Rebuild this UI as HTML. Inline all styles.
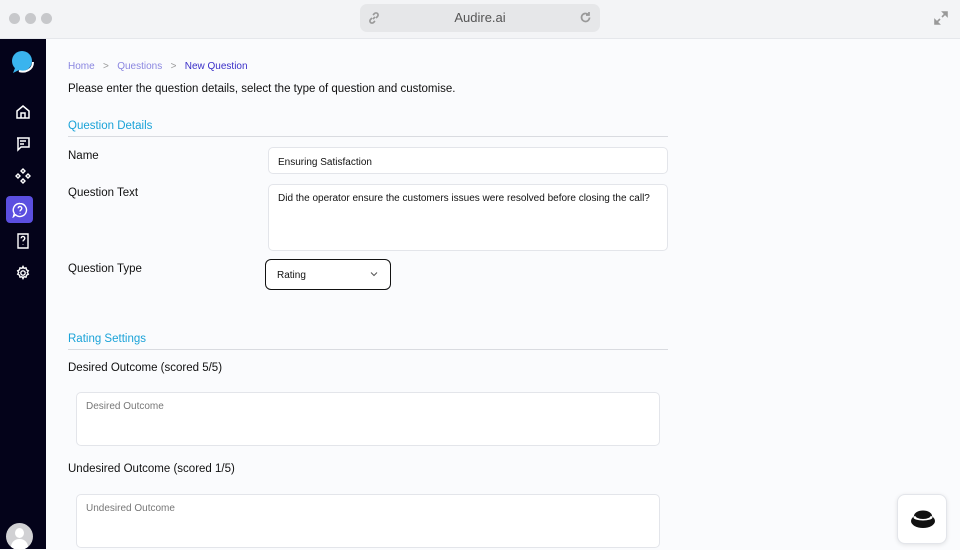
<!DOCTYPE html>
<html><head><style>
*{box-sizing:border-box;margin:0;padding:0}
body{width:960px;height:549px;overflow:hidden;font-family:"Liberation Sans",sans-serif;background:#fafbfd;position:relative;color:#111}
.top{position:absolute;left:0;top:0;width:960px;height:39px;background:#f3f4f6;border-bottom:1px solid #e5e7eb}
.dot{position:absolute;top:13px;width:11px;height:11px;border-radius:50%;background:#c7c8cb}
.url{position:absolute;left:360px;top:4px;width:240px;height:28px;border-radius:7px;background:#e6e7e9;text-align:center;line-height:28px;font-size:13px;color:#555}
.side{position:absolute;left:0;top:39px;width:46px;height:510px;background:#04031a}
.ic{position:absolute;left:10px;width:26px;height:26px;display:flex;align-items:center;justify-content:center}
.abs{position:absolute}
.lbl{position:absolute;left:68px;font-size:11.5px;color:#111}
.sec{position:absolute;left:68px;width:600px;font-size:11.5px;color:#1ba3d8;border-bottom:1px solid #d9dbe0;padding-bottom:4px}
.inp{position:absolute;background:#fff;border:1px solid #e3e5ea;border-radius:5px;font-size:10px;padding:8px 9px;color:#111}
.ph{color:#777}
</style></head><body>
<div class="top">
<div class="dot" style="left:9px"></div><div class="dot" style="left:25px"></div><div class="dot" style="left:41px"></div>
<div class="url">Audire.ai
<svg class="abs" style="left:8px;top:8px" width="12" height="12" viewBox="0 0 12 12" fill="none" stroke="#999" stroke-width="1.6"><path d="M5 7l2-2M4 6L2.5 7.5a2 2 0 003 3L7 9M8 6l1.5-1.5a2 2 0 00-3-3L5 3"/></svg>
<svg class="abs" style="left:219px;top:7px" width="13" height="13" viewBox="0 0 13 13" fill="none" stroke="#999" stroke-width="1.7"><path d="M10.5 6.5a4 4 0 11-1.2-2.9"/><path d="M10 1v3H7" /></svg>
</div>
<svg class="abs" style="left:934px;top:11px" width="14" height="14" viewBox="0 0 14 14" stroke="#999" stroke-width="1.6" fill="#999"><path d="M8 6l4-4M6 8l-4 4"/><path d="M9 1h4v4zM1 9v4h4z"/></svg>
</div>
<div class="side">
<svg class="abs" style="left:11px;top:12px" width="24" height="24" viewBox="0 0 24 24"><circle cx="11" cy="10" r="10" fill="#3ab4ee"/><path d="M4 17l-2 5 6-3z" fill="#3ab4ee"/><path d="M8 20c6 2 14-1 14-9" stroke="#fff" stroke-width="2" fill="none"/></svg>
<div class="ic" style="top:60px"><svg width="16" height="16" viewBox="0 0 16 16" fill="none" stroke="#fff" stroke-width="1.5"><path d="M2 7l6-5 6 5v7H2z"/><path d="M6 14V9h4v5"/></svg></div>
<div class="ic" style="top:92px"><svg width="16" height="16" viewBox="0 0 16 16" fill="none" stroke="#fff" stroke-width="1.5"><path d="M2 2h12v9H6l-3 3V2z"/><path d="M5 5h6M5 8h4"/></svg></div>
<div class="ic" style="top:124px"><svg width="16" height="16" viewBox="0 0 16 16" fill="none" stroke="#fff" stroke-width="1.4"><path d="M8 1l2 2-2 2-2-2zM8 11l2 2-2 2-2-2zM3 6l2 2-2 2-2-2zM13 6l2 2-2 2-2-2z"/></svg></div>
<div class="ic" style="top:157px;background:#5b4fe0;border-radius:4px;left:6px;width:27px;height:27px"><svg width="16" height="16" viewBox="0 0 16 16" fill="none" stroke="#fff" stroke-width="1.4"><path d="M8 1.5a6.5 6.5 0 11-4.5 11.2L1.5 14.5l.8-3A6.5 6.5 0 018 1.5z"/><path d="M6.2 6.3a1.8 1.8 0 113 1.3c-.8.5-1.2.8-1.2 1.8M8 11v.5"/></svg></div>
<div class="ic" style="top:189px"><svg width="16" height="16" viewBox="0 0 16 16" fill="none" stroke="#fff" stroke-width="1.4"><path d="M3 1h10v14H3z"/><path d="M6.2 5.3a1.8 1.8 0 113 1.3c-.8.5-1.2.8-1.2 1.8M8 11v.5"/></svg></div>
<div class="ic" style="top:221px"><svg width="16" height="16" viewBox="0 0 16 16" fill="none" stroke="#fff" stroke-width="1.4"><circle cx="8" cy="8" r="2.2"/><path d="M8 1.5l1 1.8 2-.5.5 2 1.8 1-1 1.7 1 1.7-1.8 1-.5 2-2-.5-1 1.8-1-1.8-2 .5-.5-2-1.8-1 1-1.7-1-1.7 1.8-1 .5-2 2 .5z"/></svg></div>
<div class="abs" style="left:6px;top:484px;width:27px;height:27px;border-radius:50%;background:#d1d1d4;overflow:hidden"><div class="abs" style="left:9px;top:5px;width:9px;height:10px;border-radius:50%;background:#fff"></div><div class="abs" style="left:5px;top:16px;width:17px;height:14px;border-radius:8px 8px 0 0;background:#fff"></div></div>
</div>
<div class="abs" style="left:68px;top:61px;font-size:10px;color:#8a86e0">Home &nbsp;&nbsp;<span style="color:#999">&gt;</span>&nbsp;&nbsp; Questions &nbsp;&nbsp;<span style="color:#999">&gt;</span>&nbsp;&nbsp; <span style="color:#3a2fc8">New Question</span></div>
<div class="lbl" style="top:83px">Please enter the question details, select the type of question and customise.</div>
<div class="sec" style="top:120px">Question Details</div>
<div class="lbl" style="top:150px">Name</div>
<div class="inp" style="left:268px;top:147px;width:400px;height:27px;padding-top:9px">Ensuring Satisfaction</div>
<div class="lbl" style="top:187px">Question Text</div>
<div class="inp" style="left:268px;top:184px;width:400px;height:67px">Did the operator ensure the customers issues were resolved before closing the call?</div>
<div class="lbl" style="top:263px">Question Type</div>
<div class="inp" style="left:265px;top:259px;width:126px;height:31px;border:1.5px solid #111;border-radius:6px;padding:10px 11px">Rating<svg class="abs" style="left:104px;top:11px" width="8" height="6" viewBox="0 0 8 6" fill="none" stroke="#555" stroke-width="1"><path d="M1 1.5l3 3 3-3"/></svg></div>
<div class="sec" style="top:333px">Rating Settings</div>
<div class="lbl" style="top:362px">Desired Outcome (scored 5/5)</div>
<div class="inp ph" style="left:76px;top:392px;width:584px;height:54px">Desired Outcome</div>
<div class="lbl" style="top:463px">Undesired Outcome (scored 1/5)</div>
<div class="inp ph" style="left:76px;top:494px;width:584px;height:54px">Undesired Outcome</div>
<div class="abs" style="left:897px;top:494px;width:50px;height:50px;background:#fff;border:1px solid #e3e5ea;border-radius:8px;box-shadow:0 1px 4px rgba(0,0,0,.1)">
<svg class="abs" style="left:11px;top:13px" width="28" height="22" viewBox="0 0 28 22"><ellipse cx="14" cy="13" rx="12" ry="7" fill="#111"/><ellipse cx="14" cy="8" rx="9" ry="5.5" fill="#111"/><ellipse cx="14" cy="9.5" rx="9.5" ry="3" fill="#fff"/><ellipse cx="14" cy="7" rx="8" ry="4" fill="#111"/></svg>
</div>
</body></html>
